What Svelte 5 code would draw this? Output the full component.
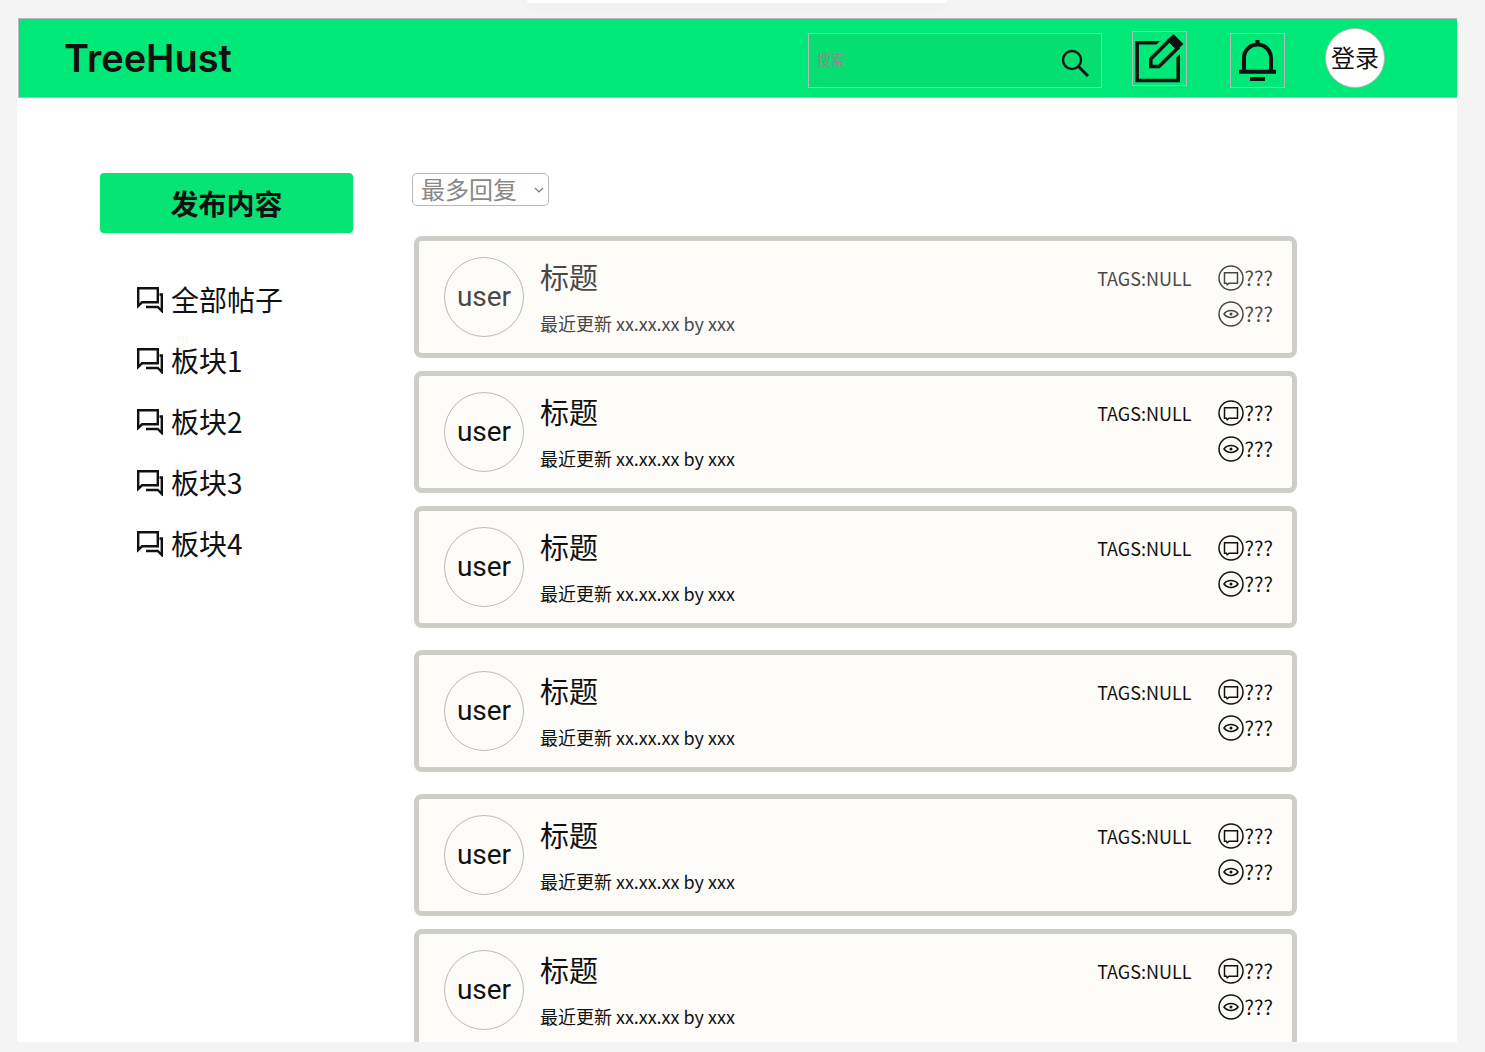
<script>
  const boards = ['全部帖子', '板块1', '板块2', '板块3', '板块4'];
  const post = { title: '标题', updated: '最近更新 xx.xx.xx by xxx', tags: 'TAGS:NULL', replies: '???', views: '???' };
  const groups = [
    [{ ...post, read: true }, post, post],
    [post],
    [post, post]
  ];
  const sorts = ['最多回复', '最新回复', '最新发布'];
  let sort = $state('最多回复');
  let query = $state('');
</script>

<div class="shell">
  <div class="sheet" aria-hidden="true"></div>
  <div class="page">
    <header class="topbar">
      <a class="logo" href="#home">TreeHust</a>
      <form class="search" onsubmit={(e) => e.preventDefault()}>
        <input type="text" placeholder="搜索" aria-label="搜索" bind:value={query} />
        <button class="find" aria-label="搜索帖子">
          <svg viewBox="0 0 28 28" width="28" height="28" fill="none" stroke="#111" stroke-width="2.4">
            <circle cx="11" cy="11" r="9" />
            <path d="M17.5 17.5 27 27" stroke-width="3" />
          </svg>
        </button>
      </form>
      <button class="tool edit" aria-label="写帖子">
        <svg viewBox="0 0 53 53" width="53" height="53">
          <path d="M27 9H2.3v41.300H47V22l-3.600 3.600v21.100H5.900V12.600h17.500z" fill="#111" />
          <path d="M17.800 34.500V27L36.500 8.300l8 8L26 34.500z" fill="none" stroke="#111" stroke-width="3.600" />
          <path d="M34 8.300 40.300 2l10 10L44 18.300z" fill="#111" />
        </svg>
      </button>
      <button class="tool bell" aria-label="通知">
        <svg viewBox="0 0 53 53" width="53" height="53" fill="none" stroke="#111" stroke-width="4">
          <path d="M13 38V24a13.500 13.500 0 0 1 27 0V38M8 37.800h37M19 45h15M26.500 6v5" />
        </svg>
      </button>
      <button class="login">登录</button>
    </header>

    <div class="body">
      <aside>
        <button class="publish">发布内容</button>
        <nav aria-label="板块">
          {#each boards as board}
            <a href="#board">
              <svg viewBox="0 0 28 28" width="28" height="28" fill="none" stroke="#111" stroke-width="2.4">
                <path d="M2.200 21V3.200h19.600v14.100H6z" />
                <path d="M23.500 9.500h2.300V26l-4-4H10" />
              </svg>
              <span>{board}</span>
            </a>
          {/each}
        </nav>
      </aside>

      <main>
        <div class="sort">
          <select aria-label="排序" bind:value={sort}>
            {#each sorts as option}<option>{option}</option>{/each}
          </select>
          <svg viewBox="0 0 10 6" width="10" height="6" fill="none" stroke="#777" stroke-width="1.2">
            <path d="M1 1l4 4 4-4" />
          </svg>
        </div>

        <div class="feed">
          {#each groups as group}
            <div class="group">
              {#each group as item}
                <article class:read={item.read}>
                  <div class="avatar">user</div>
                  <div class="text">
                    <h2>{item.title}</h2>
                    <p>{item.updated}</p>
                  </div>
                  <div class="tags">{item.tags}</div>
                  <div class="stats">
                    <div class="stat">
                      <svg viewBox="0 0 26 26" width="26" height="26" fill="none" stroke="currentColor" stroke-width="1.500">
                        <circle cx="13" cy="13" r="12" />
                        <path d="M6.500 7.800h13v10.400H11l-1.800 1.600-.7-1.600h-2z" />
                      </svg>
                      <span>{item.replies}</span>
                    </div>
                    <div class="stat">
                      <svg viewBox="0 0 26 26" width="26" height="26" fill="none" stroke="currentColor" stroke-width="1.500">
                        <circle cx="13" cy="13" r="12" />
                        <path d="M6 13c3.200-4.600 10.800-4.600 14 0-3.200 4.600-10.800 4.600-14 0z" />
                        <circle cx="13" cy="13" r="1.500" fill="currentColor" stroke="none" />
                      </svg>
                      <span>{item.views}</span>
                    </div>
                  </div>
                </article>
              {/each}
            </div>
          {/each}
        </div>
      </main>
    </div>
  </div>
</div>

<style>
  :global(body) {
    background: #f4f4f4;
  }
  .shell, .shell * {
    box-sizing: border-box;
  }
  .shell {
    height: 100vh;
    padding: 18px 28px 10px 17px;
    display: flex;
    flex-direction: column;
    font-family: "Noto Sans CJK SC", sans-serif;
    color: #111;
    overflow: hidden;
  }
  button, input, select {
    font: inherit;
    color: inherit;
    margin: 0;
    padding: 0;
    border: 0;
    background: none;
    border-radius: 0;
  }
  button {
    cursor: pointer;
  }
  a {
    color: inherit;
    text-decoration: none;
  }
  svg {
    display: block;
    flex: none;
  }
  .sheet {
    position: absolute;
    top: 0;
    left: 50%;
    width: 420px;
    height: 3px;
    margin-left: -216px;
    background: #fff;
    border-radius: 0 0 4px 4px;
    box-shadow: 0 2px 12px rgba(0, 0, 0, 0.08);
  }
  .page {
    position: relative;
    flex: 1;
    min-height: 0;
    background: #fff;
    overflow: hidden;
  }
  .topbar {
    height: 80px;
    margin-left: 1px;
    padding: 0 72px 9px 45px;
    display: flex;
    align-items: flex-end;
    background: #00e978;
    border: 1px solid #b8b8b8;
    border-right: 0;
  }
  .logo {
    margin-right: auto;
    align-self: center;
    padding-top: 9px;
    font: 600 38px/44px Inter, sans-serif;
  }
  .search {
    display: flex;
    width: 294px;
    height: 55px;
    margin-right: 30px;
    border: 1px solid #b8b8b8;
    background: #05df72;
  }
  .search input {
    flex: 1;
    min-width: 0;
    padding: 0 0 3px 8px;
    font-size: 14px;
    outline: 0;
  }
  .search input::placeholder {
    color: #8b8b8b;
    opacity: 1;
  }
  .find {
    padding: 4px 12px 0 0;
  }
  .tool {
    width: 55px;
    height: 55px;
    border: 1px solid #b8b8b8;
  }
  .edit {
    margin-bottom: 2px;
  }
  .bell {
    margin: 0 40px 0 43px;
  }
  .login {
    width: 60px;
    height: 60px;
    padding-bottom: 3px;
    border: 1px solid #b8b8b8;
    border-radius: 50%;
    background: #fff;
    font-size: 24px;
    white-space: nowrap;
    display: flex;
    align-items: center;
    justify-content: center;
  }
  .body {
    display: flex;
    padding: 75px 160px 0 83px;
  }
  aside {
    flex: none;
    width: 253px;
    margin-right: 59px;
  }
  .publish {
    width: 100%;
    height: 60px;
    border-radius: 4px;
    background: #05e475;
    font-size: 28px;
    font-weight: 700;
  }
  nav {
    padding: 35px 0 0 36px;
  }
  nav a {
    height: 61px;
    display: flex;
    align-items: center;
    gap: 7px;
    font-size: 28px;
    line-height: 40px;
  }
  main {
    flex: 1;
    min-width: 0;
  }
  .sort {
    display: grid;
    width: 137px;
    height: 33px;
    align-items: center;
  }
  .sort select, .sort svg {
    grid-area: 1 / 1;
  }
  .sort select {
    appearance: none;
    width: 100%;
    height: 33px;
    padding: 0 0 2px 8px;
    border: 1px solid #b8b8b8;
    border-radius: 5px;
    background: #fff;
    color: #888;
    font-size: 24px;
    line-height: 29px;
  }
  .sort svg {
    justify-self: end;
    margin-right: 5px;
    pointer-events: none;
  }
  .feed {
    display: flex;
    flex-direction: column;
    gap: 22px;
    padding: 30px 0 0 2px;
  }
  .group {
    display: flex;
    flex-direction: column;
    gap: 13px;
  }
  article {
    display: flex;
    min-height: 122px;
    padding: 16px 19px 0 25px;
    border: 5px solid #cdcec8;
    border-radius: 8px;
    background: #fefcf8;
  }
  .read .avatar, .read .text, .read .tags, .read .stats {
    color: #484848;
  }
  .avatar {
    flex: none;
    width: 80px;
    height: 80px;
    border: 1px solid #bbb;
    border-radius: 50%;
    font: 28px/78px Roboto, sans-serif;
    text-align: center;
  }
  .text {
    flex: 1;
    margin-left: 16px;
  }
  h2 {
    margin: 0;
    font-size: 29px;
    font-weight: 400;
    line-height: 38px;
  }
  p {
    margin: 15px 0 0;
    font-size: 18px;
    line-height: 26px;
  }
  .tags {
    margin-right: 26px;
    font-size: 18px;
    line-height: 42px;
  }
  .stats {
    display: flex;
    flex-direction: column;
    gap: 10px;
    padding-top: 8px;
  }
  .stat {
    display: flex;
    align-items: center;
    gap: 1px;
    height: 26px;
    font-size: 20px;
    line-height: 26px;
  }
</style>
